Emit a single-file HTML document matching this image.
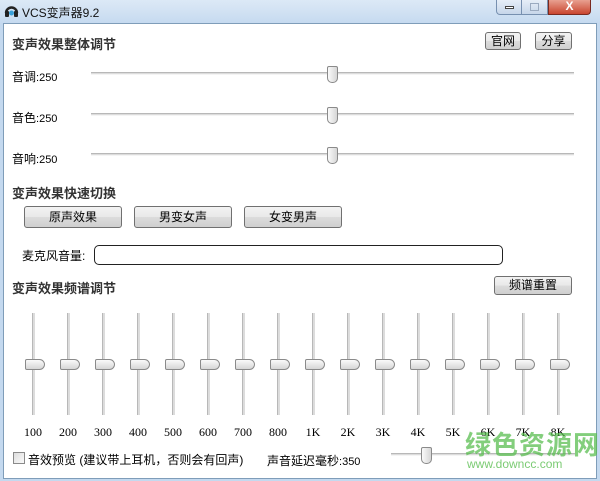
<!DOCTYPE html>
<html><head><meta charset="utf-8"><style>
*{margin:0;padding:0;box-sizing:border-box}
body{width:600px;height:481px;overflow:hidden;background:#c4d9ef;font-family:"Liberation Sans","Noto Sans CJK SC",sans-serif;font-size:12px;color:#000;position:relative}
.a{position:absolute}
.tb{left:0;top:0;width:600px;height:23px;background:linear-gradient(#dce9f6,#c6daf0)}
.win{left:3px;top:23px;width:594px;height:456px;background:#fff;border:1px solid #7f9db9}
.h{font-weight:bold;font-size:13px;color:#333}
.btn{border:1px solid #707070;border-radius:3px;background:linear-gradient(#f3f3f3 0%,#e9e9e9 50%,#dcdcdc 51%,#cfcfcf 100%);text-align:center;font-size:12px}
.track{height:3px;background:#dcdcdc;border-top:1px solid #b8b8b8;border-bottom:1px solid #f4f4f4}
.th{width:11px;height:17px;border:1px solid #8a8a8a;border-radius:2px 2px 5px 5px;background:linear-gradient(90deg,#fafafa,#d6d6d6)}
.vt{width:3px;height:102px;background:#dcdcdc;border-left:1px solid #b8b8b8}
.vth{width:20px;height:11px;border:1px solid #8a8a8a;border-radius:2px 6px 6px 2px;background:linear-gradient(#fafafa,#d6d6d6)}
.lb{font-family:"Liberation Serif","Noto Serif CJK SC",serif;font-size:12px;width:40px;text-align:center}
</style></head><body>
<div class="a tb"></div>
<svg class="a" style="left:4px;top:3px" width="15" height="15" viewBox="0 0 15 15"><path d="M2 10 A5.5 5.5 0 0 1 13 10" fill="none" stroke="#222" stroke-width="2.4"/><rect x="1" y="8" width="4" height="6" rx="1" fill="#222"/><rect x="10" y="8" width="4" height="6" rx="1" fill="#222"/><circle cx="7.5" cy="10" r="2.5" fill="#3aa0d8"/></svg>
<div class="a" style="left:22px;top:4px;font-size:12px;color:#111">VCS变声器9.2</div>
<div class="a" style="left:496px;top:0;width:26px;height:15px;border:1px solid #7790b0;border-top:0;border-radius:0 0 0 4px;background:linear-gradient(#e6eef8,#c6d6ea)"><div class="a" style="left:8px;top:6px;width:9px;height:3px;border:1px solid #444;background:#fff"></div></div>
<div class="a" style="left:522px;top:0;width:26px;height:15px;border:1px solid #7790b0;border-top:0;border-left:0;background:linear-gradient(#e6eef8,#c6d6ea)"><div class="a" style="left:8px;top:3px;width:9px;height:8px;border:1px solid #9aaac0"></div></div>
<div class="a" style="left:548px;top:0;width:43px;height:15px;border:1px solid #7a2a20;border-top:0;border-radius:0 0 4px 0;background:linear-gradient(#e8a090,#c9452f);color:#fff;font-weight:bold;text-align:center;font-size:12px;line-height:13px">X</div>
<div class="a win"></div>
<div class="a h" style="left:12px;top:34px">变声效果整体调节</div>
<div class="a btn" style="left:485px;top:32px;width:36px;height:18px;line-height:16px">官网</div>
<div class="a btn" style="left:535px;top:32px;width:37px;height:18px;line-height:16px">分享</div>

<div class="a" style="left:12px;top:68px">音调<span style="font-size:11px">:250</span></div>
<div class="a track" style="left:91px;top:72px;width:483px"></div>
<div class="a th" style="left:327px;top:66px"></div>
<div class="a" style="left:12px;top:109px">音色<span style="font-size:11px">:250</span></div>
<div class="a track" style="left:91px;top:113px;width:483px"></div>
<div class="a th" style="left:327px;top:107px"></div>
<div class="a" style="left:12px;top:150px">音响<span style="font-size:11px">:250</span></div>
<div class="a track" style="left:91px;top:153px;width:483px"></div>
<div class="a th" style="left:327px;top:147px"></div>

<div class="a h" style="left:12px;top:183px">变声效果快速切换</div>
<div class="a btn" style="left:24px;top:206px;width:98px;height:22px;line-height:20px">原声效果</div>
<div class="a btn" style="left:134px;top:206px;width:98px;height:22px;line-height:20px">男变女声</div>
<div class="a btn" style="left:244px;top:206px;width:98px;height:22px;line-height:20px">女变男声</div>
<div class="a" style="left:22px;top:247px;font-size:12px">麦克风音量:</div>
<div class="a" style="left:94px;top:245px;width:409px;height:20px;border:1px solid #222;border-radius:5px"></div>
<div class="a h" style="left:12px;top:278px">变声效果频谱调节</div>
<div class="a btn" style="left:494px;top:276px;width:78px;height:19px;line-height:17px">频谱重置</div>

<div id="eq"></div>
<script>
var l=["100","200","300","400","500","600","700","800","1K","2K","3K","4K","5K","6K","7K","8K"],h="";
for(var i=0;i<16;i++){var x=32+i*35;
h+='<div class="a vt" style="left:'+x+'px;top:313px"></div><div class="a vth" style="left:'+(x-7)+'px;top:359px"></div><div class="a lb" style="left:'+(x-19)+'px;top:425px">'+l[i]+'</div>';}
document.getElementById('eq').outerHTML=h;
</script>

<div class="a" style="left:13px;top:452px;width:12px;height:12px;border:1px solid #8a8a8a;background:linear-gradient(135deg,#ddd,#fafafa)"></div>
<div class="a" style="left:28px;top:451px;font-size:12px">音效预览 (建议带上耳机，否则会有回声)</div>
<div class="a" style="left:267px;top:452px;font-size:12px">声音延迟毫秒<span style="font-size:11px">:350</span></div>
<div class="a track" style="left:391px;top:453px;width:184px"></div>
<div class="a th" style="left:421px;top:447px"></div>
<div class="a" style="left:465px;top:425px;font-size:26px;font-weight:bold;color:rgba(90,190,80,.75);letter-spacing:1px">绿色资源网</div>
<div class="a" style="left:467px;top:457px;font-size:12px;color:rgba(90,190,80,.8)">www.downcc.com</div>
</body></html>
